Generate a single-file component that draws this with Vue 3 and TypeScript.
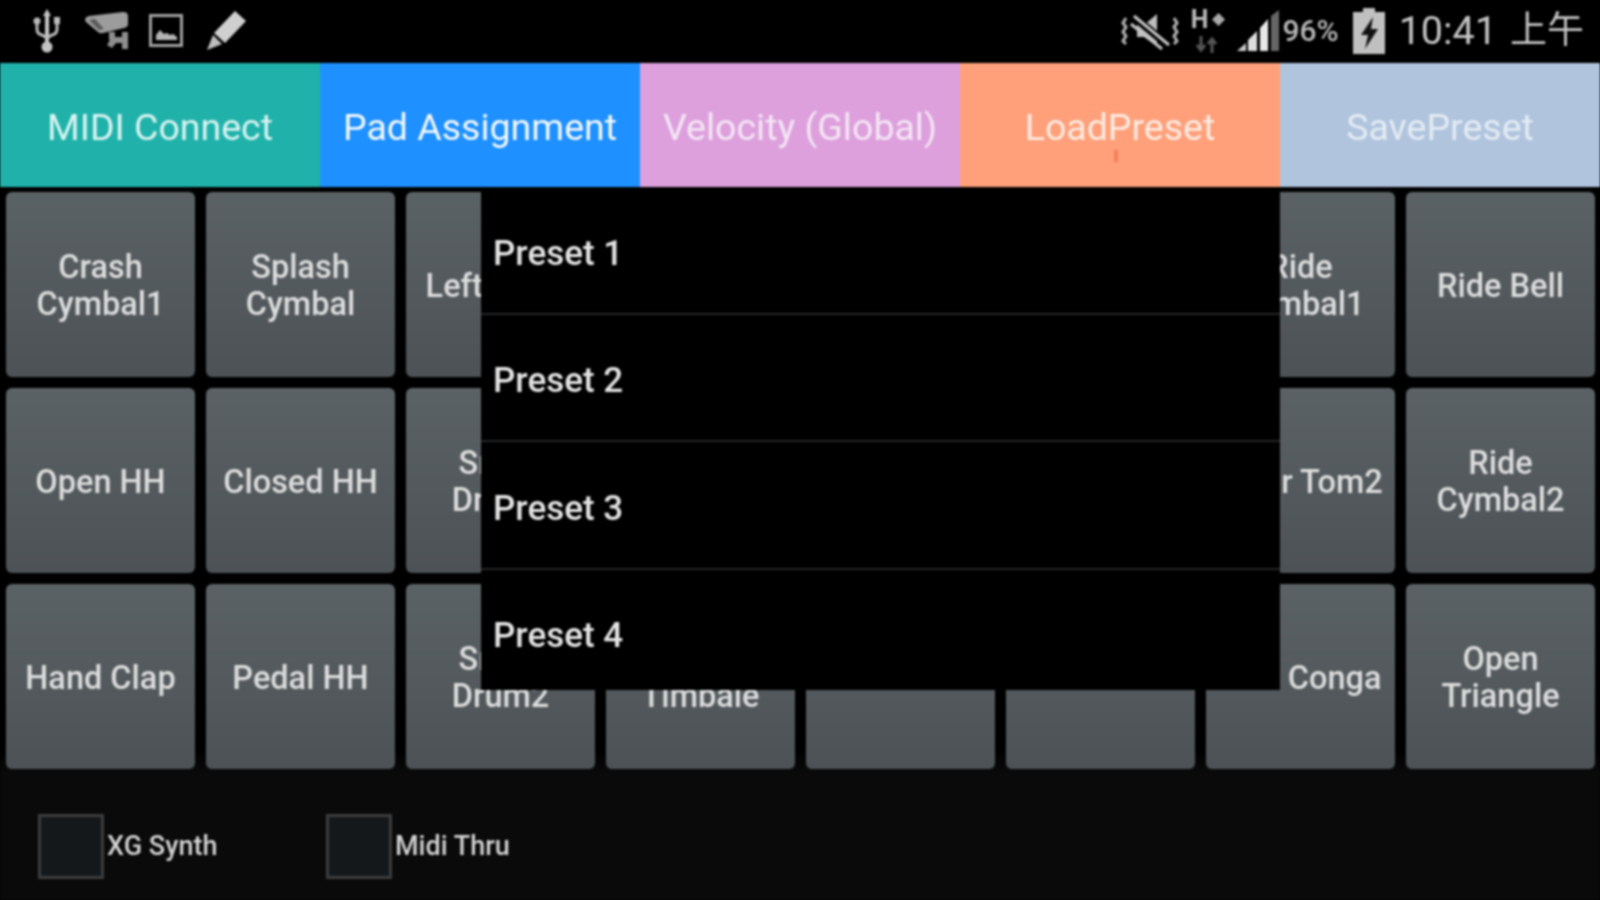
<template>
  <div class="screen">
    <!-- status bar -->
    <div class="status-bar">
      <div class="status-left">
        <svg class="ic" width="28" height="44" viewBox="0 0 28 44">
          <path d="M14 0l4 7h-2v27h-4V7h-2z" fill="#c4c4c4" />
          <circle cx="14" cy="38" r="5.500" fill="#c4c4c4" />
          <path d="M4 14v6q0 5 5 6l5 3M24 14v6q0 5-5 6l-5 3" fill="none" stroke="#bbb" stroke-width="3" />
          <circle cx="4" cy="12" r="3.500" fill="#bbb" />
          <rect x="21" y="8" width="6" height="7" fill="#bbb" />
        </svg>
        <svg class="ic" width="44" height="38" viewBox="0 0 44 38">
          <path d="M0 8q0-3 4-4L38 0q5 0 5 4v8q0 3-4 4L18 21q-3 1-5-1L1 10z" fill="#9c9c9c" />
          <path d="M4 8l10 10 5-1L10 7z" fill="#5a5a5a" />
          <path d="M24 20h6v5h7v-5h6v17h-6v-6h-6l-4 5-5-3 3-5h-1z" fill="#8e8e8e" />
        </svg>
        <svg class="ic" width="34" height="33" viewBox="0 0 34 33">
          <rect x="1.500" y="1.500" width="31" height="30" fill="none" stroke="#a0a0a0" stroke-width="3" />
          <path d="M7 26v-5l4-5 4 4 3-1 3 2 3-1 4 3v3z" fill="#b4b4b4" />
        </svg>
        <svg class="ic" width="41" height="40" viewBox="0 0 41 40">
          <path d="M30 0l11 10-21 22-11-10z" fill="#cfcfcf" />
          <path d="M8 24l9 9-15 6z" fill="#bdbdbd" />
        </svg>
      </div>
      <div class="status-right">
        <svg width="58" height="38" viewBox="0 0 58 38">
          <path d="M16 13h7l13-11v32L23 25h-7z" fill="#bdbdbd" />
          <path d="M12 4l36 30" stroke="#000" stroke-width="8" />
          <path d="M13 4l35 29M10 12l31 25" stroke="#c4c4c4" stroke-width="3" />
          <path d="M5 6l-3 5 3 4-3 5 3 4-3 5 3 3M53 6l3 5-3 4 3 5-3 4 3 5-3 3" fill="none" stroke="#b0b0b0" stroke-width="3" />
        </svg>
        <div class="net">
          <div class="net-top">
            <span class="net-type">H</span>
            <svg width="13" height="13" viewBox="0 0 13 13"><path d="M6.500 0l6.500 6.500-6.500 6.500L0 6.500z" fill="#aaa" /></svg>
          </div>
          <svg width="24" height="17" viewBox="0 0 24 17">
            <path d="M7 0v13M3 9l4 5 4-5M18 17V4M14 8l4-5 4 5" fill="none" stroke="#555" stroke-width="3" />
          </svg>
        </div>
        <svg width="42" height="41" viewBox="0 0 42 41">
          <path d="M0 41l9-8v8z" fill="#ccc" />
          <path d="M11 30l9-9v20h-9z" fill="#ddd" />
          <path d="M23 18l8-9v32h-8z" fill="#e8e8e8" />
          <path d="M34 6l8-6v41h-8z" fill="#666" />
        </svg>
        <span class="pct">96%</span>
        <svg width="32" height="46" viewBox="0 0 32 46">
          <path d="M10 0h12v4h10v42H0V4h10z" fill="#c0c0c0" />
          <path d="M20 9L8 27h7l-3 14 13-20h-7z" fill="#111" />
        </svg>
        <span class="clock">10:41</span>
        <span class="clock cjk">上午</span>
      </div>
    </div>

    <!-- tab buttons -->
    <div class="tabs">
      <div v-for="t in tabs" :key="t.label" class="tab" :class="t.cls">{{ t.label }}</div>
    </div>
    <span class="touch-mark"></span>

    <!-- pad grid -->
    <div class="pads">
      <div v-for="(p, i) in pads" :key="i" class="pad">{{ p }}</div>
    </div>

    <!-- options -->
    <div class="options">
      <label class="opt"><span class="box"></span>XG Synth</label>
      <label class="opt"><span class="box"></span>Midi Thru</label>
    </div>

    <!-- load preset popup -->
    <div class="popup">
      <div v-for="n in 4" :key="n" class="item">Preset {{ n }}</div>
    </div>
  </div>
</template>

<script setup lang="ts">
const tabs = [
  { label: 'MIDI Connect', cls: 'teal' },
  { label: 'Pad Assignment', cls: 'blue' },
  { label: 'Velocity (Global)', cls: 'plum' },
  { label: 'LoadPreset', cls: 'salmon' },
  { label: 'SavePreset', cls: 'steel' },
]

// blank entries sit completely behind the popup
const pads: string[] = [
  'Crash\nCymbal1', 'Splash\nCymbal', 'Left Crash', '', '', '', 'Ride\nCymbal1', 'Ride Bell',
  'Open HH', 'Closed HH', 'Snare\nDrum1', '', '', '', 'Floor Tom2', 'Ride\nCymbal2',
  'Hand Clap', 'Pedal HH', 'Snare\nDrum2', 'High\nTimbale', '', '', 'Low Conga', 'Open\nTriangle',
]
</script>

<style scoped>
.screen {
  position: relative;
  width: 1600px;
  height: 900px;
  overflow: hidden;
  display: flex;
  flex-direction: column;
  background: #0a0a0a;
  font-family: Roboto, "Noto Sans CJK SC", sans-serif;
  filter: blur(0.8px);
}

.status-bar {
  height: 63px;
  flex: none;
  background: #000;
  display: flex;
  justify-content: space-between;
  align-items: center;
  padding: 0 16px 2px 33px;
  box-sizing: border-box;
}

.status-left,
.status-right {
  display: flex;
  align-items: center;
}

.status-left {
  gap: 22px;
}

.status-left .ic:nth-child(2) {
  margin-left: 2px;
}

.status-left .ic:nth-child(3) {
  margin-left: -2px;
}

.status-right svg:first-child {
  margin-right: 12px;
}

.net {
  display: flex;
  flex-direction: column;
  align-items: flex-start;
  gap: 5px;
  margin-right: 12px;
}

.net-top {
  display: flex;
  align-items: center;
  gap: 1px;
}

.net-type {
  font-size: 25px;
  line-height: 22px;
  font-weight: 700;
  color: #bbb;
}

.net svg:last-child {
  margin-left: 3px;
}

.pct {
  font-size: 30px;
  color: #b8b8b8;
  font-weight: 500;
  margin: 0 14px 0 3px;
}

.clock {
  font-size: 39.500px;
  color: #c4c4c4;
  margin-left: 14px;
  line-height: 46px;
}

.clock.cjk {
  font-size: 37px;
  margin-left: 13px;
}

.tabs {
  height: 124px;
  flex: none;
  display: grid;
  grid-template-columns: repeat(5, 320px);
}

.tab {
  display: flex;
  align-items: center;
  justify-content: center;
  padding-top: 4px;
  box-sizing: border-box;
  font-size: 37.500px;
}

.teal { background: #20b2aa; color: #d9f3f1; }
.blue { background: #1e90ff; color: #f2f8ff; }
.plum { background: #dda0dd; color: #f4e6f4; }
.salmon { background: #ffa07a; color: #fdebe2; }
.steel { background: #b0c4de; color: #e4ebf3; }

.touch-mark {
  position: absolute;
  left: 1114px;
  top: 150px;
  width: 4px;
  height: 12px;
  background: #f4805c;
}

.pads {
  display: grid;
  grid-template-columns: repeat(8, 189px);
  grid-auto-rows: 185px;
  gap: 11px;
  padding: 5px 6px 0;
  background: linear-gradient(#000 96%, #0a0a0a);
  flex: none;
  height: 586px;
  box-sizing: border-box;
}

.pad {
  border-radius: 6px;
  background: linear-gradient(#5b6265, #4c5256);
  color: #dcdcdc;
  font-size: 32.500px;
  font-weight: 500;
  line-height: 37px;
  white-space: pre-line;
  text-align: center;
  padding-top: 3px;
  box-sizing: border-box;
  display: flex;
  align-items: center;
  justify-content: center;
}

.options {
  flex: 1;
  display: flex;
  align-items: center;
  padding: 18px 0 0 38px;
  gap: 40px;
}

.opt {
  width: 248px;
  display: flex;
  align-items: center;
  gap: 3px;
  font-size: 27px;
  font-weight: 500;
  color: #d2d2d2;
}

.opt .box {
  margin-bottom: -1px;
}

.box {
  width: 66px;
  height: 65px;
  flex: none;
  box-sizing: border-box;
  border: 3px solid #3c3c3c;
  background: #15181a;
}

.popup {
  position: absolute;
  left: 481px;
  top: 187px;
  width: 799px;
  height: 503px;
  overflow: hidden;
  background: #000;
}

.item {
  height: 127.500px;
  box-sizing: border-box;
  border-bottom: 2px solid #262626;
  padding: 7px 0 0 12px;
  display: flex;
  align-items: center;
  font-size: 35px;
  font-weight: 500;
  color: #e4e4e4;
}
</style>

<style>
html, body {
  background: #000;
}
</style>
